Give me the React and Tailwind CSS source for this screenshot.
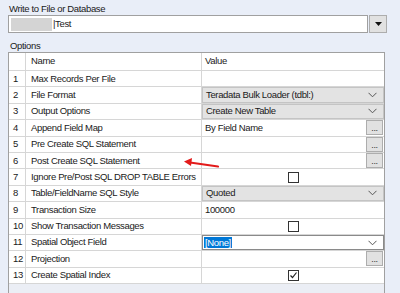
import React from 'react';

const ROWS = [
  { n: 1, name: 'Max Records Per File', type: 'text', value: '' },
  { n: 2, name: 'File Format', type: 'combo', value: 'Teradata Bulk Loader (tdbl:)' },
  { n: 3, name: 'Output Options', type: 'combo', value: 'Create New Table' },
  { n: 4, name: 'Append Field Map', type: 'button', value: 'By Field Name' },
  { n: 5, name: 'Pre Create SQL Statement', type: 'button', value: '' },
  { n: 6, name: 'Post Create SQL Statement', type: 'button', value: '' },
  { n: 7, name: 'Ignore Pre/Post SQL DROP TABLE Errors', type: 'check', value: false },
  { n: 8, name: 'Table/FieldName SQL Style', type: 'combo', value: 'Quoted' },
  { n: 9, name: 'Transaction Size', type: 'text', value: '100000' },
  { n: 10, name: 'Show Transaction Messages', type: 'check', value: false },
  { n: 11, name: 'Spatial Object Field', type: 'focus', value: '[None]' },
  { n: 12, name: 'Projection', type: 'button', value: '' },
  { n: 13, name: 'Create Spatial Index', type: 'check', value: true },
];

const Chevron = () => (
  <svg width="9" height="6" viewBox="0 0 9 6" className="shrink-0">
    <path d="M0.5 0.8 L4.5 4.8 L8.5 0.8" fill="none" stroke="#555" strokeWidth="1" />
  </svg>
);

const Ellipsis = () => (
  <div className="w-[17px] h-[15px] mr-[1px] shrink-0 bg-[#e1e1e1] border border-[#adadad] flex items-end justify-center text-[9px] leading-[9px] text-[#333] pb-[1px]">
    ...
  </div>
);

const CheckBox = ({ checked }) => (
  <div className="w-[11px] h-[11px] border border-[#333] bg-white flex items-center justify-center">
    {checked && (
      <svg width="9" height="9" viewBox="0 0 9 9">
        <path d="M1.5 4.5 L3.5 6.5 L7.5 1.5" fill="none" stroke="#222" strokeWidth="1.2" />
      </svg>
    )}
  </div>
);

const ValueCell = ({ row }) => {
  if (row.type === 'combo') {
    return (
      <div className="h-full w-full bg-[#e3e3e3] border border-[#c4c4c4] flex items-center justify-between pl-[3px] pr-[6px]">
        <span>{row.value}</span>
        <Chevron />
      </div>
    );
  }
  if (row.type === 'focus') {
    return (
      <div className="h-full w-full bg-white border border-[#8a8a8a] flex items-center justify-between pl-[1px] pr-[6px]">
        <span className="bg-[#0078d7] text-white px-[1px] leading-[11px]">{row.value}</span>
        <Chevron />
      </div>
    );
  }
  if (row.type === 'button') {
    return (
      <div className="h-full w-full flex items-center justify-between pl-[3px]">
        <span>{row.value}</span>
        <Ellipsis />
      </div>
    );
  }
  if (row.type === 'check') {
    return (
      <div className="h-full w-full flex items-center justify-center">
        <CheckBox checked={row.value} />
      </div>
    );
  }
  return (
    <div className="h-full w-full flex items-center pl-[3px]">
      <span>{row.value}</span>
    </div>
  );
};

export default function App() {
  return (
    <div className="w-[400px] h-[293px] overflow-hidden bg-[#e9eef8] text-[9.5px] tracking-[-0.35px] text-[#1a1a1a] font-['Liberation_Sans',Arial,sans-serif] relative">
      <div className="pl-[9px] pt-[2px] leading-[13px]">Write to File or Database</div>

      {/* file path input */}
      <div className="flex items-center pl-[8px] h-[18px]">
        <div className="w-[360px] h-[18px] bg-white border border-[#a0a0a0] flex items-center pl-[2px]">
          <div className="w-[41px] h-[13px] bg-[#d4d4d4]" />
          <span className="ml-[1px]">|Test</span>
        </div>
        <div className="ml-[1px] w-[18px] h-[18px] bg-[#e1e1e1] border border-[#adadad] flex items-center justify-center">
          <svg width="7" height="4" viewBox="0 0 7 4">
            <path d="M0 0 H7 L3.5 4 Z" fill="#111" />
          </svg>
        </div>
      </div>

      <div className="pl-[10px] pt-[6px] leading-[13px]">Options</div>

      {/* property grid */}
      <div className="ml-[8px] w-[377px] h-[300px] border-l border-t border-r border-[#a0a0a0] bg-[#ebeef5]">
        <div className="flex h-[18px] bg-white border-b border-[#d6d6d6]">
          <div className="w-[17px] border-r border-[#d6d6d6]" />
          <div className="w-[176px] border-r border-[#d6d6d6] pl-[5px] flex items-center">Name</div>
          <div className="flex-1 pl-[3px] flex items-center">Value</div>
        </div>
        {ROWS.map(row => (
          <div key={row.n} className="flex h-[16.4px] bg-white border-b border-[#d6d6d6]">
            <div className="w-[17px] border-r border-[#d6d6d6] pl-[4px] flex items-center">{row.n}</div>
            <div className="w-[176px] border-r border-[#d6d6d6] pl-[5px] flex items-center whitespace-nowrap overflow-hidden">{row.name}</div>
            <div className="flex-1 min-w-0">
              <ValueCell row={row} />
            </div>
          </div>
        ))}
      </div>

      {/* red annotation arrow */}
      <svg className="absolute left-[180px] top-[155px]" width="44" height="16" viewBox="0 0 44 16">
        <path d="M10 7.5 L38 11.5" stroke="#e31b1b" strokeWidth="2.2" strokeLinecap="round" />
        <path d="M4 6.5 L12 3 L11 11 Z" fill="#e31b1b" />
      </svg>
    </div>
  );
}
